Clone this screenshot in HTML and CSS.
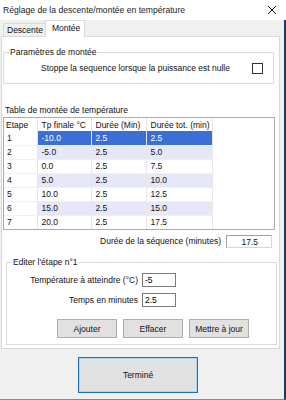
FILE: index.html
```html
<!DOCTYPE html>
<html lang="fr">

<head>
    <meta charset="UTF-8">
    <meta name="viewport" content="width=device-width, initial-scale=1.0">
    <title>Réglage de la descente/montée en température</title>
    <link rel="stylesheet" href="styles.css">
</head>

<body>

    <div class="window">
        <div class="titlebar">
            <span class="title">Réglage de la descente/montée en température</span>
            <svg class="close" width="10" height="10" viewBox="0 0 10 10">
                <path d="M1 1 L9 9 M9 1 L1 9" stroke="#1a1a1a" stroke-width="1" fill="none" />
            </svg>
        </div>

        <div class="client">
            <div class="tabs">
                <div class="tab">Descente</div>
                <div class="tab active">Montée</div>
            </div>

            <div class="page">
                <fieldset class="group group-params">
                    <legend>Paramètres de montée</legend>
                    <div class="check-row">
                        <span>Stoppe la sequence lorsque la puissance est nulle</span>
                        <span class="checkbox"></span>
                    </div>
                </fieldset>

                <div class="table-caption">Table de montée de température</div>
                <div class="listview">
                    <table>
                        <colgroup>
                            <col class="c-step">
                            <col class="c-temp">
                            <col class="c-dur">
                            <col class="c-total">
                        </colgroup>
                        <thead>
                            <tr>
                                <th>Etape</th>
                                <th>Tp finale °C</th>
                                <th>Durée (Min)</th>
                                <th>Durée tot. (min)</th>
                            </tr>
                        </thead>
                        <tbody>
                            <tr class="selected"><td>1</td><td>-10.0</td><td>2.5</td><td>2.5</td></tr>
                            <tr class="alt"><td>2</td><td>-5.0</td><td>2.5</td><td>5.0</td></tr>
                            <tr><td>3</td><td>0.0</td><td>2.5</td><td>7.5</td></tr>
                            <tr class="alt"><td>4</td><td>5.0</td><td>2.5</td><td>10.0</td></tr>
                            <tr><td>5</td><td>10.0</td><td>2.5</td><td>12.5</td></tr>
                            <tr class="alt"><td>6</td><td>15.0</td><td>2.5</td><td>15.0</td></tr>
                            <tr><td>7</td><td>20.0</td><td>2.5</td><td>17.5</td></tr>
                        </tbody>
                    </table>
                </div>

                <div class="total-row">
                    <span>Durée de la séquence (minutes)</span>
                    <span class="total-box">17.5</span>
                </div>

                <fieldset class="group group-edit">
                    <legend>Editer l'étape n°1</legend>
                    <div class="field-row">
                        <label for="temp">Température à atteindre (°C)</label>
                        <input type="text" id="temp" value="-5">
                    </div>
                    <div class="field-row">
                        <label for="duree">Temps en minutes</label>
                        <input type="text" id="duree" value="2.5">
                    </div>
                    <div class="buttons">
                        <button class="btn">Ajouter</button>
                        <button class="btn">Effacer</button>
                        <button class="btn">Mettre à jour</button>
                    </div>
                </fieldset>
            </div>

            <div class="footer">
                <button class="btn btn-done">Terminé</button>
            </div>
        </div>
    </div>

</body>

</html>
```

FILE: styles.css
```css
body {
    margin: 0;
    background-color: #f0f0f0;
    font-family: "Liberation Sans", Arial, sans-serif;
    font-size: 8.5px;
    color: #111;
}

.window {
    width: 286px;
    height: 400px;
    overflow: hidden;
}

.titlebar {
    height: 20px;
    background-color: #fff;
    display: flex;
    align-items: center;
    justify-content: space-between;
    padding: 0 9px 0 3px;
    box-sizing: border-box;
}

.title {
    font-size: 8.6px;
    color: #222;
}

.client {
    width: 284px;
    height: 379px;
    border-right: 2px solid #1d3a5e;
    border-bottom: 1px solid #6f8db3;
}

/* onglets */
.tabs {
    height: 16px;
    display: flex;
    align-items: flex-end;
    padding-left: 3px;
}

.tab {
    height: 13px;
    line-height: 13px;
    padding: 0 2px 0 3px;
    border: 1px solid #d9d9d9;
    border-bottom: none;
    background-color: #f0f0f0;
    box-sizing: border-box;
}

.tab.active {
    height: 17px;
    line-height: 14px;
    padding: 0 4px 0 6px;
    margin-bottom: -1px;
    margin-left: -1px;
    background-color: #fff;
    position: relative;
    z-index: 1;
}

.page {
    margin-left: 1px;
    width: 279px;
    box-sizing: border-box;
    border: 1px solid #d9d9d9;
    background-color: #fff;
    padding-bottom: 3px;
}

/* groupes */
.group {
    margin: 8px 0 0 1px;
    padding: 2px 10px 8px 0;
    width: 271px;
    box-sizing: border-box;
    border: 1px solid #dcdcdc;
}

.group legend {
    margin-left: 5px;
    padding: 0 1px;
    line-height: 14px;
}

.check-row {
    height: 14px;
    display: flex;
    align-items: center;
    justify-content: flex-end;
}

.checkbox {
    width: 9px;
    height: 9px;
    margin-left: 22px;
    border: 1px solid #333;
}

.table-caption {
    margin: 19px 0 0 3px;
    line-height: 14px;
}

.listview {
    margin-left: 1px;
    width: 272px;
    height: 113px;
    box-sizing: border-box;
    border: 1px solid #adadad;
    overflow: hidden;
}

.listview table {
    width: 208px;
    border-collapse: collapse;
    table-layout: fixed;
}

.c-step { width: 33px; }
.c-temp { width: 54px; }
.c-dur { width: 55px; }
.c-total { width: 66px; }

.listview th,
.listview td {
    height: 14px;
    box-sizing: border-box;
    line-height: 12px;
    padding: 0 0 0 4px;
    text-align: left;
    font-weight: normal;
    white-space: nowrap;
    border-right: 1px solid #e6e6e6;
    border-bottom: 1px solid #f0f0f0;
}

.listview th {
    height: 13px;
    border-bottom: none;
}

.listview th:first-child {
    padding-left: 2px;
}

.listview td:first-child {
    padding-left: 3px;
}

.listview tr.alt td {
    background-color: #e7e8f7;
}

.listview tr.selected td {
    background-color: #3a6fd6;
    color: #fff;
}

.listview tr td:first-child {
    background-color: #fff;
    color: #111;
}

.total-row {
    margin-top: 4px;
    height: 14px;
    display: flex;
    align-items: center;
    justify-content: flex-end;
    padding-right: 7px;
}

.total-box {
    width: 46px;
    height: 13px;
    line-height: 12px;
    margin-left: 5px;
    box-sizing: border-box;
    border: 1px solid #a0a0a0;
    border-right-color: #d6d6d6;
    border-bottom-color: #d6d6d6;
    text-align: right;
    padding-right: 13px;
}

.group-edit {
    margin: 7px 0 0 4px;
    padding: 4px 0 6px 0;
}

.field-row {
    display: grid;
    grid-template-columns: 131px 34px;
    column-gap: 4px;
    align-items: center;
    margin-bottom: 6px;
}

.field-row label {
    text-align: right;
}

.field-row input {
    height: 14px;
    box-sizing: border-box;
    border: 1px solid #7a7a7a;
    padding: 0 2px;
    font-family: inherit;
    font-size: 8.5px;
}

.buttons {
    display: flex;
    gap: 6px;
    margin: 12px 0 0 50px;
}

.btn {
    width: 60px;
    height: 19px;
    padding: 0;
    background-color: #e1e1e1;
    border: 1px solid #adadad;
    font-family: inherit;
    font-size: 8.5px;
    color: #111;
}

.footer {
    padding: 8px 0 0 78px;
}

.btn-done {
    width: 120px;
    height: 36px;
    border: 1px solid #1f6fb8;
    box-shadow: inset 0 0 0 1px #a9d3f2;
}
```
